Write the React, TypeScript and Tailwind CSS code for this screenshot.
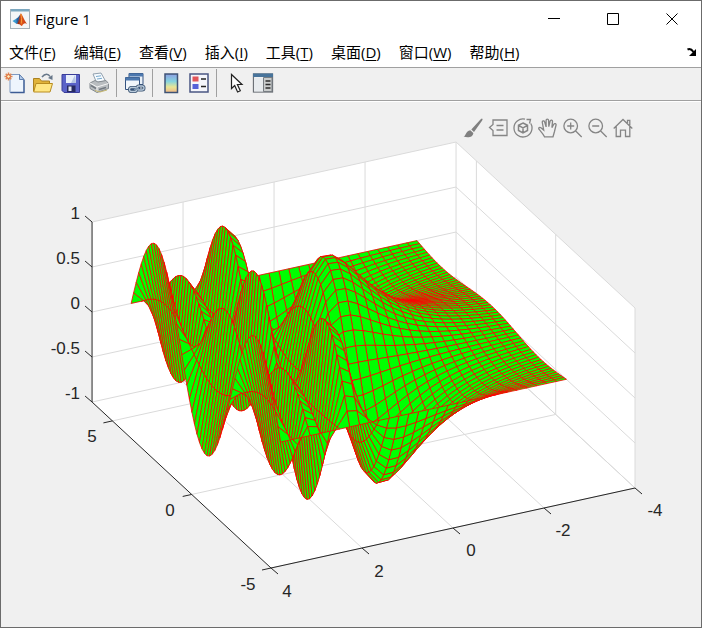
import React from "react";

type Vec2 = [number, number];

const X_MAX = 4;
const X_MIN = -4;
const Y_MIN = -5;
const Y_MAX = 2 * Math.PI;
const X_SAMPLES = 30;
const Y_SAMPLES = 60;

function project(x: number, y: number, z: number): Vec2 {
  return [
    271 + 45.5 * (X_MAX - x) - 15.86 * (y - Y_MIN),
    568 - 10 * (X_MAX - x) - 14.71 * (y - Y_MIN) - 90 * (z + 1),
  ];
}

function points(...list: Vec2[]) {
  return list.map(([a, b]) => `${a.toFixed(2)},${b.toFixed(2)}`).join(" ");
}

function surface(): string[] {
  const at = (i: number, j: number) => {
    const x = -Math.PI + (2 * Math.PI * i) / (X_SAMPLES - 1);
    const y = -Math.PI + (3 * Math.PI * j) / (Y_SAMPLES - 1);
    return project(x, y, Math.sin(Math.exp(x)) * Math.sin(y));
  };
  const cells: string[] = [];
  for (let j = Y_SAMPLES - 2; j >= 0; j--) {
    for (let i = 0; i < X_SAMPLES - 1; i++) {
      cells.push(points(at(i, j), at(i + 1, j), at(i + 1, j + 1), at(i, j + 1)));
    }
  }
  return cells;
}

const cells = surface();

const gridLines: string[] = [
  ...[-1, -0.5, 0, 0.5, 1].map((z) =>
    points(project(X_MAX, Y_MAX, z), project(X_MIN, Y_MAX, z), project(X_MIN, Y_MIN, z))
  ),
  ...[2, 0, -2, -4].map((x) =>
    points(project(x, Y_MAX, 1), project(x, Y_MAX, -1), project(x, Y_MIN, -1))
  ),
  ...[5, 0, -5].map((y) =>
    points(project(X_MIN, y, 1), project(X_MIN, y, -1), project(X_MAX, y, -1))
  ),
];

function Tick({ from, dx, dy }: { from: Vec2; dx: number; dy: number }) {
  return <line x1={from[0]} y1={from[1]} x2={from[0] + dx} y2={from[1] + dy} />;
}

function Plot() {
  return (
    <svg viewBox="1 102 700 525" className="block w-full" role="img" aria-label="3-D surface plot">
      <polygon
        fill="#fff"
        points={points(
          project(X_MAX, Y_MAX, 1),
          project(X_MIN, Y_MAX, 1),
          project(X_MIN, Y_MIN, 1),
          project(X_MIN, Y_MIN, -1),
          project(X_MAX, Y_MIN, -1),
          project(X_MAX, Y_MAX, -1)
        )}
      />
      <g fill="none" stroke="#dadada" strokeWidth="1">
        {gridLines.map((p) => (
          <polyline key={p} points={p} />
        ))}
      </g>
      <g stroke="#262626" strokeWidth="1" fill="none">
        <polyline
          points={points(
            project(X_MAX, Y_MAX, 1),
            project(X_MAX, Y_MAX, -1),
            project(X_MAX, Y_MIN, -1),
            project(X_MIN, Y_MIN, -1)
          )}
        />
        {[-1, -0.5, 0, 0.5, 1].map((z) => (
          <Tick key={z} from={project(X_MAX, Y_MAX, z)} dx={-7} dy={-6} />
        ))}
        {[-5, 0, 5].map((y) => (
          <Tick key={y} from={project(X_MAX, y, -1)} dx={-9} dy={2} />
        ))}
        {[4, 2, 0, -2, -4].map((x) => (
          <Tick key={x} from={project(x, Y_MIN, -1)} dx={7} dy={6} />
        ))}
      </g>
      <g fill="#00ff00" stroke="#ff0000" strokeWidth="0.8" strokeLinejoin="round">
        {cells.map((p, i) => (
          <polygon key={i} points={p} />
        ))}
      </g>
      <g className="font-['Liberation_Sans',Arial,sans-serif] text-[17px]" fill="#262626">
        <g textAnchor="end">
          {["1", "0.5", "0", "-0.5", "-1"].map((t, i) => (
            <text key={t} x="80" y={219 + 45 * i}>{t}</text>
          ))}
        </g>
        <g textAnchor="middle">
          {["5", "0", "-5"].map((t, i) => (
            <text key={t} x={92 + 78 * i} y={442 + 74 * i}>{t}</text>
          ))}
          {["4", "2", "0", "-2", "-4"].map((t, i) => (
            <text key={t} x={287 + 92 * i} y={597 - 20 * i - (i > 1 ? 1 : 0)}>{t}</text>
          ))}
        </g>
      </g>
    </svg>
  );
}

function MatlabLogo() {
  return (
    <svg viewBox="0 0 20 20" className="h-5 w-5">
      <defs>
        <linearGradient id="flame" x1="0" y1="0" x2="1" y2="0">
          <stop offset="0" stopColor="#7a1c12" />
          <stop offset="0.45" stopColor="#e2571c" />
          <stop offset="1" stopColor="#c33a12" />
        </linearGradient>
      </defs>
      <rect x="0.5" y="0.5" width="19" height="19" fill="#f4f6f7" stroke="#a4b0b8" />
      <rect x="1" y="0" width="18" height="2.5" fill="#7ba7bf" />
      <path d="M2.500 12l4-2.600L9 11.5l-2.400 3.500z" fill="#3c9bd0" />
      <path d="M6.500 9.400C8 9 9 7 10.500 5L9.500 12l-2.900 3z" fill="#2a62a0" />
      <path d="M10.800 4.200c1.500 1 2.500 5.500 6.200 10.800-1.800-1.500-3.500-1-5 2-1 .5-1.500-2.500-5-2C9 12.500 9.300 7 10.800 4.200z" fill="url(#flame)" />
      <path d="M10.800 5c.7 3 1 6 .4 9.500" stroke="#f5a13a" strokeWidth="1" fill="none" />
    </svg>
  );
}

const toolIcons: Record<string, React.ReactNode> = {
  new: (
    <>
      <path d="M6 2.500h9.500l4.500 5v13H6z" fill="#eef5fd" stroke="#7f9ac2" />
      <path d="M6.500 20.500H20V8" fill="none" stroke="#3d5c94" strokeWidth="1.300" />
      <path d="M15.500 2.500v5H20z" fill="#b6cdeb" stroke="#5f7fae" />
      <path d="M4.500 .5v8M.5 4.500h8M1.700 1.700l5.600 5.600M7.300 1.700L1.700 7.300" stroke="#e08855" strokeWidth="1.500" />
      <circle cx="4.500" cy="4.500" r="1.800" fill="#fff0c0" stroke="#e0662f" />
    </>
  ),
  open: (
    <>
      <path d="M1.500 19V6.500h6l2 2.500h8v10z" fill="#e0b33a" stroke="#aa8122" />
      <path d="M4 11.500h16.500L18 20H1.700z" fill="#ffe784" stroke="#b88c20" />
      <path d="M10 5c3-4 6.500-3.500 8-.5" fill="none" stroke="#677789" strokeWidth="1.500" />
      <path d="M20.500 3v5l-4.500-2z" fill="#677789" />
    </>
  ),
  save: (
    <>
      <path d="M2 2.500h17.500v18H4l-2-2z" fill="#5a62c8" stroke="#3a3d98" />
      <path d="M6 3h10v8H6z" fill="#e9effa" />
      <path d="M15 3l1 8h-5z" fill="#b6c5e2" />
      <path d="M7 13.500h8.500v6.500H7z" fill="#272a62" />
      <path d="M8.500 14.500h3v4.500h-3z" fill="#e2e5ef" />
    </>
  ),
  print: (
    <>
      <path d="M5 2l8-1 4.500 8-9 1.500z" fill="#f6fbff" stroke="#91a0ae" />
      <path d="M8 4.500l5-.7M9 7l5-.7" stroke="#79aacd" />
      <path d="M2 11l5-2.500 3 1.500 8-1.500 2.500 3v5L9 20.500 2 16.500z" fill="#b9bdc0" stroke="#858b90" />
      <path d="M2 11l7 4 11.500-3.500M9 15v5" fill="none" stroke="#f4f4f4" />
      <path d="M3 13.500l5 3M11 17.500l7-2" stroke="#727980" strokeWidth="1.500" />
      <path d="M7 18.500l5 1.500 7-2" stroke="#c4b66e" fill="none" />
    </>
  ),
  link: (
    <>
      <path d="M5 1.500h14v11H5z" fill="#e9f0f7" stroke="#365481" />
      <path d="M5 1.500h14v3H5z" fill="#4c78ae" />
      <path d="M1.500 5.500h14v12h-14z" fill="#f1f6fb" stroke="#365481" />
      <path d="M1.500 5.500h14v3h-14z" fill="#4c78ae" />
      <g fill="none" stroke="#395270" strokeWidth="3">
        <rect x="5.500" y="15.500" width="7" height="4" rx="2" />
        <rect x="13" y="14" width="7" height="4" rx="2" />
      </g>
      <g fill="none" stroke="#b9cadb" strokeWidth="1.300">
        <rect x="5.500" y="15.500" width="7" height="4" rx="2" />
        <rect x="13" y="14" width="7" height="4" rx="2" />
      </g>
      <path d="M10 17.500l5-1" stroke="#7892ad" strokeWidth="1.500" />
    </>
  ),
  colorbar: (
    <>
      <defs>
        <linearGradient id="bar" x1="0" y1="0" x2="0" y2="1">
          <stop offset="0" stopColor="#8d9fe3" />
          <stop offset="0.4" stopColor="#85d4df" />
          <stop offset="0.7" stopColor="#e8e695" />
          <stop offset="1" stopColor="#f0b888" />
        </linearGradient>
      </defs>
      <rect x="5" y="2" width="12.500" height="18.500" fill="url(#bar)" stroke="#3f5375" strokeWidth="1.500" />
    </>
  ),
  legend: (
    <>
      <rect x="2" y="2" width="18" height="18" fill="#f4f5fb" stroke="#4a5682" strokeWidth="1.500" />
      <rect x="4.500" y="4.500" width="6" height="5" fill="#e2555a" />
      <rect x="4.500" y="12" width="6" height="5" fill="#5560d8" />
      <path d="M13 7h5M13 14.500h5" stroke="#222" strokeWidth="1.500" />
    </>
  ),
  cursor: (
    <path d="M7.500 2.500v14l3.200-3 2.900 6.500 2.700-1.200-2.900-6.300h4.600z" fill="#fff" stroke="#222" strokeWidth="1.200" />
  ),
  tools: (
    <>
      <rect x="1.500" y="2" width="19" height="18" fill="#f5f5f5" stroke="#6c7177" strokeWidth="1.300" />
      <rect x="1" y="1.500" width="20" height="3.500" fill="#48749b" />
      <path d="M2 5.500h9v14H2z" fill="#e7ebee" />
      <path d="M11.500 5.500h8.500v14h-8.500z" fill="#c9cccc" stroke="#777d82" />
      <path d="M13.500 9h5M13.500 12.500h5M13.500 16h5" stroke="#2d2d2d" strokeWidth="1.500" />
    </>
  ),
};

function ToolButton({ icon, label }: { icon: string; label: string }) {
  return (
    <button type="button" aria-label={label} className="flex h-7 w-7 items-center justify-center">
      <svg viewBox="0 0 22 22" className="h-[22px] w-[22px]">
        {toolIcons[icon]}
      </svg>
    </button>
  );
}

function Separator() {
  return <span className="mr-1 ml-[3px] h-7 w-px bg-[#a0a0a0]" />;
}

const axesTools: { label: string; drawing: React.ReactNode }[] = [
  {
    label: "Brush",
    drawing: (
      <>
        <path d="M19 0.500c1 .6.600 1.200 0 2.200L11 14l-2.700-2.500L17 2c.8-.8 1.400-1.600 2-1.500z" fill="#808080" stroke="none" />
        <path d="M7.300 12.200l3 2.800c0 3.800-4.800 5.300-9.800 3.500 2.600-.5 2-5.500 6.800-6.300z" fill="#808080" stroke="none" />
      </>
    ),
  },
  {
    label: "Data tips",
    drawing: <path d="M5 2h14v15.500H5v-5L1.500 9.500 5 6.500zM8.500 7.500h7M8.500 12h7" />,
  },
  {
    label: "Rotate 3D",
    drawing: (
      <>
        <path d="M12 1.200a9 9 0 1 0 5.800 4.300M13.500 1.500l4 0-1 4" />
        <path d="M10 5l4.500 2.300v5.200L10 15l-4.500-2.500V7.300zM5.500 7.300L10 9.800l4.500-2.500M10 9.800V15" strokeWidth="1.500" />
      </>
    ),
  },
  {
    label: "Pan",
    drawing: (
      <path d="M6.500 18.800C5 15.500 3 13.800.9 11.200c-.6-1.400.9-2.300 2-1.400l2.800 2.300L4.300 4.500c-.3-1.700 1.800-2.200 2.300-.6l1.500 5V2.500c0-1.800 2.400-1.800 2.500 0l.2 6.200 1.300-5.500c.4-1.600 2.600-1.200 2.400.5l-.6 5.900 1.900-3.300c.8-1.400 2.700-.5 2.200 1l-1.500 6.200-1.500 5.300z" />
    ),
  },
  {
    label: "Zoom in",
    drawing: <path d="M14.500 8a6.800 6.800 0 1 1-13.600 0 6.800 6.800 0 0 1 13.600 0zM12.700 13l6 6M7.700 4.500v7M4.200 8h7" />,
  },
  {
    label: "Zoom out",
    drawing: <path d="M14.500 8a6.800 6.800 0 1 1-13.600 0 6.800 6.800 0 0 1 13.600 0zM12.700 13l6 6M4.200 8h7" />,
  },
  {
    label: "Restore view",
    drawing: <path d="M.7 10.500L10 1.500l9.300 9M3.200 8.500v10h4.300v-6.300h5v6.300h4.300v-10M14.500 5V2.300h2.300v5" />,
  },
];

function AxesToolbar() {
  return (
    <div className="absolute top-[13px] right-[66px] flex">
      {axesTools.map((tool) => (
        <button
          key={tool.label}
          type="button"
          aria-label={tool.label}
          className="flex h-[25px] w-[25px] items-center justify-center"
        >
          <svg viewBox="0 0 20 20" className="h-5 w-5" fill="none" stroke="#858585" strokeWidth="1.300">
            {tool.drawing}
          </svg>
        </button>
      ))}
    </div>
  );
}

const menus: [string, string][] = [
  ["文件", "F"],
  ["编辑", "E"],
  ["查看", "V"],
  ["插入", "I"],
  ["工具", "T"],
  ["桌面", "D"],
  ["窗口", "W"],
  ["帮助", "H"],
];

const windowControls: [string, string][] = [
  ["Minimize", "M0 5.500h12"],
  ["Maximize", "M.5.500h11v11H.5z"],
  ["Close", "M.5.500l11 11M11.500.5l-11 11"],
];

export default function App() {
  return (
    <div className="flex min-h-screen flex-col border border-[#6b6b6b] bg-[#f0f0f0] font-['Open_Sans','Noto_Sans_CJK_SC',sans-serif] text-black">
      <header className="flex h-[37px] items-center bg-white pb-0.5 pl-[9px]">
        <MatlabLogo />
        <h1 className="ml-[5px] text-[15px] leading-5">Figure 1</h1>
        <div className="ml-auto flex">
          {windowControls.map(([label, d]) => (
            <button key={label} type="button" aria-label={label} className="flex h-[35px] w-[59px] items-center justify-center">
              <svg viewBox="0 0 12 12" className="h-3 w-3" fill="none" stroke="#000">
                <path d={d} />
              </svg>
            </button>
          ))}
        </div>
      </header>
      <nav className="flex h-[30px] items-center gap-[18px] border-b border-[#a0a0a0] bg-white pb-0.5 pl-2">
        {menus.map(([name, key]) => (
          <button key={key} type="button" className="text-[15px] leading-5 whitespace-nowrap">
            {name}(<span className="underline underline-offset-2">{key}</span>)
          </button>
        ))}
        <button type="button" aria-label="Dock figure" className="mr-1 ml-auto">
          <svg viewBox="0 0 10 10" className="h-2.5 w-2.5">
            <path d="M.5 2.500C3 1.200 4.500 2 6.500 5" fill="none" stroke="#000" strokeWidth="2" />
            <path d="M9 2v7H2z" fill="#000" />
          </svg>
        </button>
      </nav>
      <div className="flex h-[33px] items-center border-b border-[#a0a0a0] pb-0.5">
        <ToolButton icon="new" label="New figure" />
        <ToolButton icon="open" label="Open" />
        <ToolButton icon="save" label="Save" />
        <ToolButton icon="print" label="Print" />
        <Separator />
        <ToolButton icon="link" label="Link plot" />
        <Separator />
        <ToolButton icon="colorbar" label="Insert colorbar" />
        <ToolButton icon="legend" label="Insert legend" />
        <Separator />
        <ToolButton icon="cursor" label="Edit plot" />
        <ToolButton icon="tools" label="Open property inspector" />
      </div>
      <main className="relative border-t border-white">
        <Plot />
        <AxesToolbar />
      </main>
    </div>
  );
}
